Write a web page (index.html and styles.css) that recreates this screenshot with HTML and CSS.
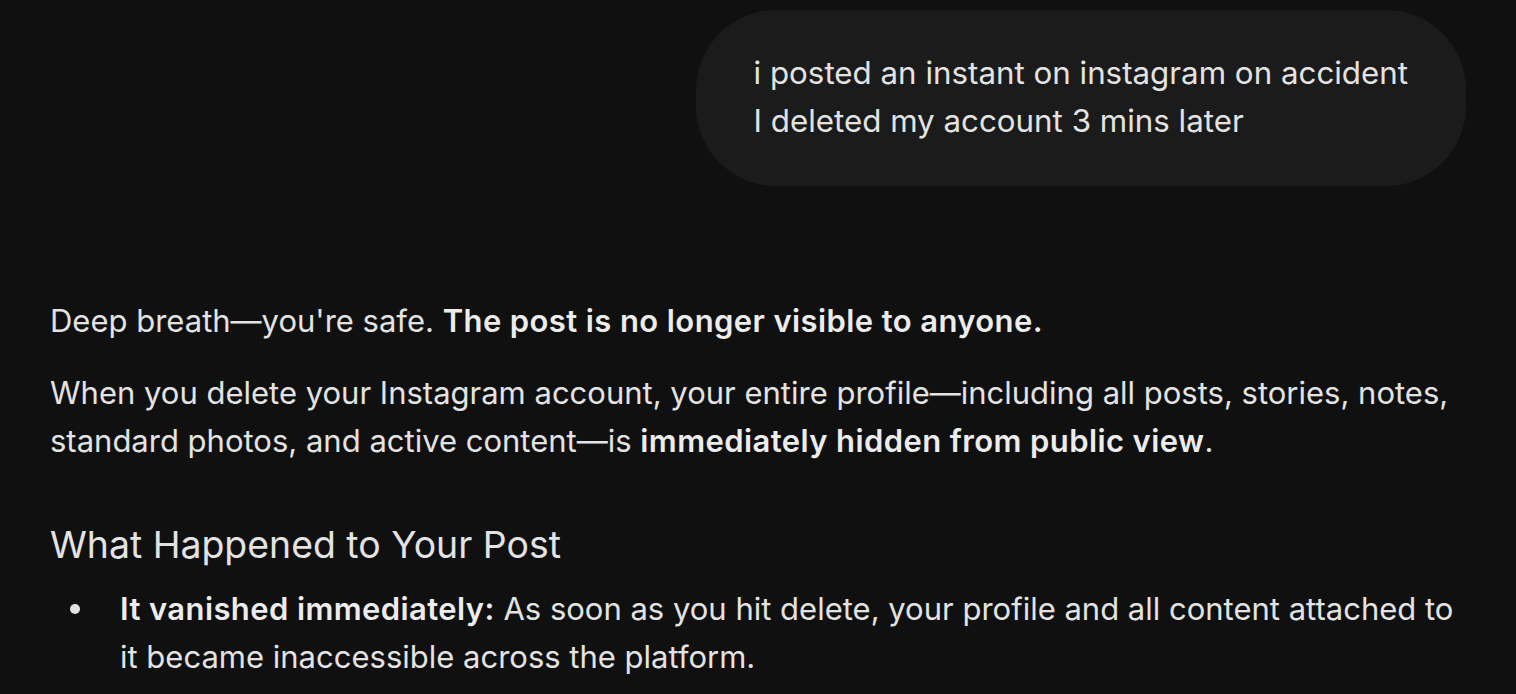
FILE: index.html
```html
<!DOCTYPE html>
<html>
<head>
<meta charset="utf-8">
<link rel="stylesheet" href="styles.css">
</head>
<body>
<div class="chat">
  <div class="user-row">
    <div class="bubble">
      <p>i posted an instant on instagram on accident</p>
      <p>I deleted my account 3 mins later</p>
    </div>
  </div>
  <div class="response">
    <p>Deep breath—you're safe. <b>The post is no longer visible to anyone.</b></p>
    <p>When you delete your Instagram account, your entire profile—including all posts, stories, notes, standard photos, and active content—is <b>immediately hidden from public view</b>.</p>
    <h2>What Happened to Your Post</h2>
    <ul>
      <li><b>It vanished immediately:</b> As soon as you hit delete, your profile and all content attached to it became inaccessible across the platform.</li>
    </ul>
  </div>
</div>
</body>
</html>
```
FILE: styles.css
```css
html, body {
  margin: 0;
  padding: 0;
  background: #101010;
  overflow: hidden;
}
body {
  font-family: Inter, "Noto Sans", sans-serif;
  color: #e3e3e3;
  font-size: 31.2px;
  line-height: 48px;
}
.chat {
  padding: 10px 50px 0 50px;
  display: flex;
  flex-direction: column;
}
.user-row {
  display: flex;
  justify-content: flex-end;
}
.bubble {
  background: #1b1b1b;
  border-radius: 80px;
  padding: 39px 58px 41px 58px;
  font-size: 31.3px;
}
.bubble p {
  margin: 0;
}
.response {
  margin-top: 111px;
  width: 1420px;
  font-size: 31px;
}
.response p {
  margin: 0 0 24px 0;
}
.response b {
  font-weight: 600;
  color: #ececec;
  letter-spacing: 0.4px;
}
.response h2 {
  font-size: 37.4px;
  font-weight: 400;
  line-height: 56px;
  margin: 52px 0 12px 0;
}
.response ul {
  margin: 0;
  padding: 0;
  list-style: none;
}
.response li {
  position: relative;
  padding-left: 70px;
}
.response li::before {
  content: "";
  position: absolute;
  left: 20px;
  top: 19px;
  width: 10px;
  height: 10px;
  border-radius: 50%;
  background: #e3e3e3;
}
```
